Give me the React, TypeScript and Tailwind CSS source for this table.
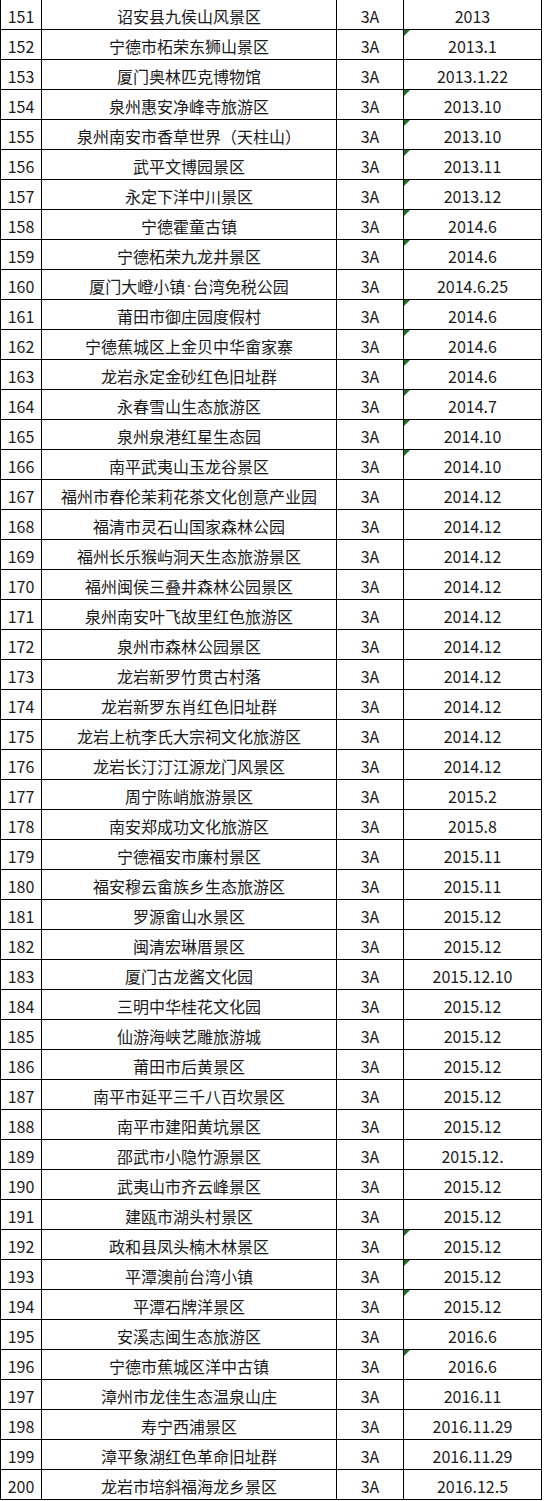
const rows: [number, string, string, boolean][] = [
  [151, '诏安县九侯山风景区', '2013', false],
  [152, '宁德市柘荣东狮山景区', '2013.1', true],
  [153, '厦门奥林匹克博物馆', '2013.1.22', false],
  [154, '泉州惠安净峰寺旅游区', '2013.10', true],
  [155, '泉州南安市香草世界（天柱山）', '2013.10', true],
  [156, '武平文博园景区', '2013.11', true],
  [157, '永定下洋中川景区', '2013.12', true],
  [158, '宁德霍童古镇', '2014.6', true],
  [159, '宁德柘荣九龙井景区', '2014.6', true],
  [160, '厦门大嶝小镇·台湾免税公园', '2014.6.25', false],
  [161, '莆田市御庄园度假村', '2014.6', true],
  [162, '宁德蕉城区上金贝中华畲家寨', '2014.6', true],
  [163, '龙岩永定金砂红色旧址群', '2014.6', true],
  [164, '永春雪山生态旅游区', '2014.7', true],
  [165, '泉州泉港红星生态园', '2014.10', true],
  [166, '南平武夷山玉龙谷景区', '2014.10', true],
  [167, '福州市春伦茉莉花茶文化创意产业园', '2014.12', false],
  [168, '福清市灵石山国家森林公园', '2014.12', false],
  [169, '福州长乐猴屿洞天生态旅游景区', '2014.12', false],
  [170, '福州闽侯三叠井森林公园景区', '2014.12', false],
  [171, '泉州南安叶飞故里红色旅游区', '2014.12', false],
  [172, '泉州市森林公园景区', '2014.12', false],
  [173, '龙岩新罗竹贯古村落', '2014.12', false],
  [174, '龙岩新罗东肖红色旧址群', '2014.12', false],
  [175, '龙岩上杭李氏大宗祠文化旅游区', '2014.12', false],
  [176, '龙岩长汀汀江源龙门风景区', '2014.12', false],
  [177, '周宁陈峭旅游景区', '2015.2', false],
  [178, '南安郑成功文化旅游区', '2015.8', false],
  [179, '宁德福安市廉村景区', '2015.11', false],
  [180, '福安穆云畲族乡生态旅游区', '2015.11', false],
  [181, '罗源畲山水景区', '2015.12', false],
  [182, '闽清宏琳厝景区', '2015.12', false],
  [183, '厦门古龙酱文化园', '2015.12.10', false],
  [184, '三明中华桂花文化园', '2015.12', false],
  [185, '仙游海峡艺雕旅游城', '2015.12', false],
  [186, '莆田市后黄景区', '2015.12', false],
  [187, '南平市延平三千八百坎景区', '2015.12', false],
  [188, '南平市建阳黄坑景区', '2015.12', false],
  [189, '邵武市小隐竹源景区', '2015.12.', false],
  [190, '武夷山市齐云峰景区', '2015.12', false],
  [191, '建瓯市湖头村景区', '2015.12', false],
  [192, '政和县凤头楠木林景区', '2015.12', true],
  [193, '平潭澳前台湾小镇', '2015.12', true],
  [194, '平潭石牌洋景区', '2015.12', true],
  [195, '安溪志闽生态旅游区', '2016.6', false],
  [196, '宁德市蕉城区洋中古镇', '2016.6', true],
  [197, '漳州市龙佳生态温泉山庄', '2016.11', false],
  [198, '寿宁西浦景区', '2016.11.29', false],
  [199, '漳平象湖红色革命旧址群', '2016.11.29', false],
  [200, '龙岩市培斜福海龙乡景区', '2016.12.5', false],
];

function Cell({ children, className = '' }: { children: React.ReactNode; className?: string }) {
  return (
    <div className={`relative flex h-[30px] items-center justify-center border-r border-b border-black pt-[2px] ${className}`}>
      {children}
    </div>
  );
}

// the middle dot is half-width in the original, CJK fonts draw it full-width
function Name({ text }: { text: string }) {
  const parts = text.split('·');
  if (parts.length === 1) return <>{text}</>;
  return (
    <>
      {parts[0]}
      <span className="px-[1px]" style={{ fontFamily: '"Liberation Sans", sans-serif' }}>·</span>
      {parts[1]}
    </>
  );
}

export default function App() {
  return (
    <div
      className="w-[544px] bg-white text-[16px] leading-none text-[#1a1a1a]"
      style={{ fontFamily: '"Noto Sans CJK SC", "Noto Sans", sans-serif' }}
    >
      <div className="grid w-[542px] grid-cols-[41px_295px_67px_138px] border-l border-black">
        {rows.map(([no, name, date, flag]) => (
          <div key={no} className="contents">
            <Cell>{no}</Cell>
            <Cell>
              <Name text={name} />
            </Cell>
            <Cell>3A</Cell>
            <Cell>
              {flag && (
                <span className="absolute left-0 top-0 h-0 w-0 border-t-[6px] border-r-[6px] border-t-[#1f6e1f] border-r-transparent" />
              )}
              {date}
            </Cell>
          </div>
        ))}
      </div>
    </div>
  );
}
